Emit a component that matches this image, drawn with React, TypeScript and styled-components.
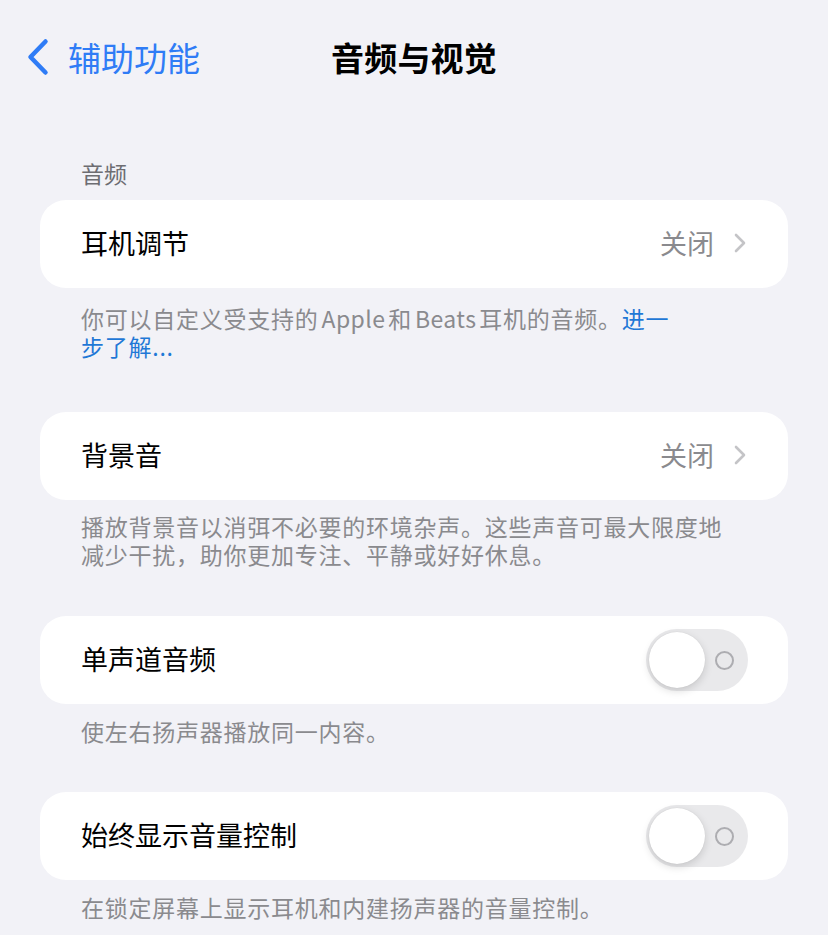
import React from "react";
import styled, { createGlobalStyle } from "styled-components";

const GlobalStyle = createGlobalStyle`
  html, body {
    margin: 0;
    padding: 0;
    background: #f2f2f7;
  }
  body {
    font-family: "Noto Sans CJK SC", "Noto Sans", sans-serif;
    -webkit-font-smoothing: antialiased;
  }
`;

const Page = styled.div`
  width: 828px;
  min-height: 935px;
  background: #f2f2f7;
  padding: 0 40px;
  box-sizing: border-box;
`;

const NavBar = styled.header`
  height: 114px;
  display: grid;
  grid-template-columns: 1fr auto 1fr;
  align-items: center;
`;

const BackButton = styled.div`
  display: flex;
  align-items: center;
  gap: 18px;
  margin-left: -14px;
  color: #2f7cf6;
  font-size: 33px;
  line-height: 40px;
`;

const Title = styled.h1`
  margin: 0;
  font-size: 33px;
  line-height: 40px;
  font-weight: 700;
  color: #000;
  letter-spacing: 0.2px;
`;

const SectionHeader = styled.div`
  padding: 44px 0 0 41px;
  margin-bottom: 12px;
  font-size: 23px;
  line-height: 30px;
  color: #6d6d72;
`;

const Group = styled.section<{ $gap: number }>`
  margin-bottom: ${(p) => p.$gap}px;
`;

const Card = styled.div`
  background: #fff;
  border-radius: 26px;
  height: 88px;
  padding: 0 40px 0 41px;
  display: flex;
  align-items: center;
  justify-content: space-between;
`;

const Label = styled.span`
  font-size: 27px;
  color: #000;
  line-height: 36px;
  margin-top: -3px;
`;

const Detail = styled.span`
  display: flex;
  align-items: center;
  gap: 20px;
  margin-right: 2px;
  margin-top: -3px;
  font-size: 27px;
  line-height: 36px;
  color: #8a8a8e;
`;

const Footer = styled.p<{ $top: number }>`
  margin: 0;
  padding: ${(p) => p.$top}px 41px 0;
  font-size: 23px;
  line-height: 28px;
  letter-spacing: 0.75px;
  color: #8a8a8e;
  white-space: nowrap;
`;

const Latin = styled.span`
  margin: 0 3px;
  letter-spacing: 0.4px;
`;

const Link = styled.span`
  color: #1f78d6;
`;

const Track = styled.div`
  width: 102px;
  height: 62px;
  border-radius: 31px;
  background: #e9e9eb;
  box-sizing: border-box;
  padding: 3px 14px 3px 3px;
  display: flex;
  align-items: center;
  justify-content: space-between;
`;

const Knob = styled.div`
  width: 56px;
  height: 56px;
  border-radius: 50%;
  background: #fff;
  box-shadow: 0 3px 8px rgba(0, 0, 0, 0.15), 0 0 1px rgba(0, 0, 0, 0.12);
`;

const OffMark = styled.div`
  width: 15px;
  height: 15px;
  border-radius: 50%;
  border: 2px solid #adadb1;
`;

const Chevron = ({ color, w, h, sw }: { color: string; w: number; h: number; sw: number }) => (
  <svg width={w} height={h} viewBox={`0 0 ${w} ${h}`} fill="none">
    <path
      d={`M${w - sw} ${sw} L${sw} ${h / 2} L${w - sw} ${h - sw}`}
      stroke={color}
      strokeWidth={sw}
      strokeLinecap="round"
      strokeLinejoin="round"
    />
  </svg>
);

const Disclosure = () => (
  <svg width="12" height="20" viewBox="0 0 12 20" fill="none">
    <path d="M2 2 L10 10 L2 18" stroke="#c4c4c7" strokeWidth="2.6" strokeLinecap="round" strokeLinejoin="round" />
  </svg>
);

const Toggle = () => (
  <Track>
    <Knob />
    <OffMark />
  </Track>
);

export default function App() {
  return (
    <>
      <GlobalStyle />
      <Page>
        <NavBar>
          <BackButton>
            <Chevron color="#2f7cf6" w={24} h={40} sw={4.5} />
            <span>辅助功能</span>
          </BackButton>
          <Title>音频与视觉</Title>
          <div />
        </NavBar>

        <SectionHeader>音频</SectionHeader>

        <Group $gap={52}>
          <Card>
            <Label>耳机调节</Label>
            <Detail>
              关闭
              <Disclosure />
            </Detail>
          </Card>
          <Footer $top={16}>
            你可以自定义受支持的<Latin>Apple</Latin>和<Latin>Beats</Latin>耳机的音频。<Link>进一</Link>
            <br />
            <Link>步了解...</Link>
          </Footer>
        </Group>

        <Group $gap={48}>
          <Card>
            <Label>背景音</Label>
            <Detail>
              关闭
              <Disclosure />
            </Detail>
          </Card>
          <Footer $top={12}>
            播放背景音以消弭不必要的环境杂声。这些声音可最大限度地
            <br />
            减少干扰，助你更加专注、平静或好好休息。
          </Footer>
        </Group>

        <Group $gap={47}>
          <Card>
            <Label>单声道音频</Label>
            <Toggle />
          </Card>
          <Footer $top={13}>使左右扬声器播放同一内容。</Footer>
        </Group>

        <Group $gap={0}>
          <Card>
            <Label>始终显示音量控制</Label>
            <Toggle />
          </Card>
          <Footer $top={13}>在锁定屏幕上显示耳机和内建扬声器的音量控制。</Footer>
        </Group>
      </Page>
    </>
  );
}
